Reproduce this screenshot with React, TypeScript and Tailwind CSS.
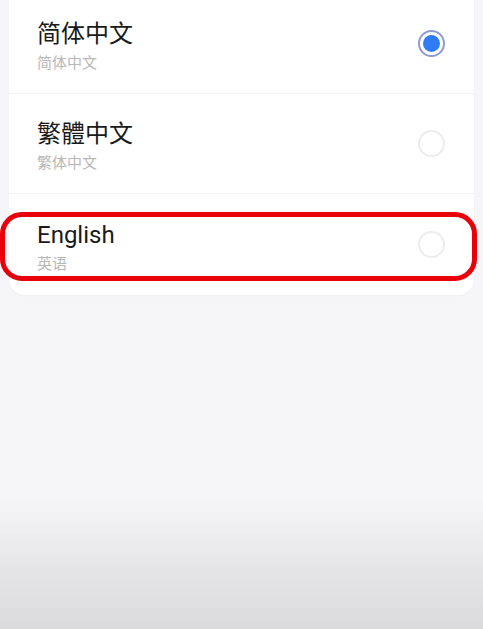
const languages = [
  { name: "简体中文", sub: "简体中文", selected: true },
  { name: "繁體中文", sub: "繁体中文", selected: false },
  { name: "English", sub: "英语", selected: false },
]

const Radio = ({ checked }: { checked: boolean }) =>
  checked ? (
    <div className="flex h-[27px] w-[27px] items-center justify-center rounded-full border-2 border-[#8e9bd2] bg-white">
      <div className="h-[17px] w-[17px] rounded-full bg-[#2f7cf6]" />
    </div>
  ) : (
    <div className="h-[27px] w-[27px] rounded-full border-2 border-[#ececec] bg-white" />
  )

export default function App() {
  return (
    <div
      className="relative flex h-[629px] w-[483px] flex-col overflow-hidden bg-gradient-to-b from-[#f6f6f8] from-[79%] via-[#e6e6e8] via-[90%] to-[#dbdbde]"
      style={{ fontFamily: 'Roboto, "Noto Sans CJK SC", sans-serif' }}
    >
      <div className="ml-[9px] mt-[-6px] w-[465px] rounded-b-[16px] bg-white pb-[1px] shadow-[0_1px_2px_rgba(0,0,0,0.03)]">
        {languages.map((lang, i) => (
          <div
            key={lang.name}
            className={`flex h-[100px] items-center justify-between pl-[28px] pr-[29px] ${
              i < languages.length - 1 ? "border-b border-[#f2f2f2]" : ""
            }`}
          >
            <div className="flex flex-col pt-[5px]">
              <span className="text-[24px] leading-[30px] text-[#1a1a1a]">{lang.name}</span>
              <span className="mt-[4px] text-[15px] leading-[20px] text-[#b8b8b8]">{lang.sub}</span>
            </div>
            <Radio checked={lang.selected} />
          </div>
        ))}
      </div>

      {/* red highlight annotation */}
      <div className="pointer-events-none absolute left-[0px] top-[212px] h-[69px] w-[477px] rounded-[22px] border-[5px] border-[#e8000b]" />
    </div>
  )
}
